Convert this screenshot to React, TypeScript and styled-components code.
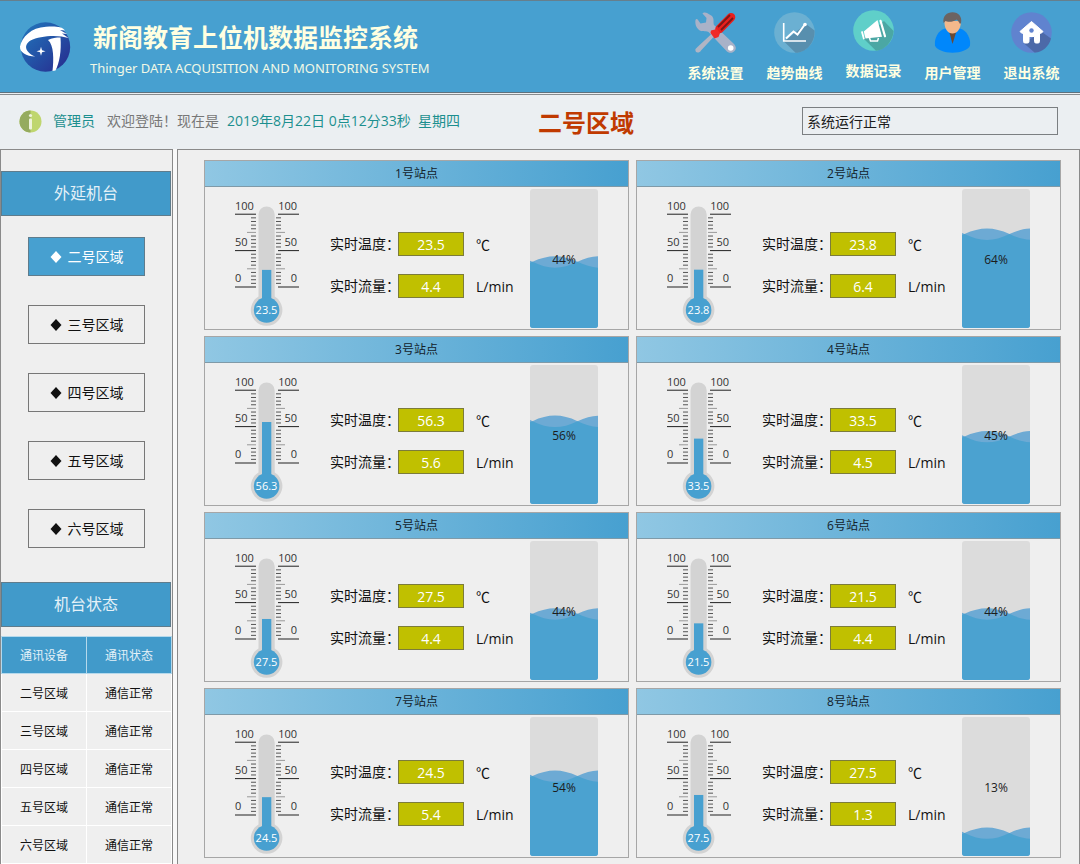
import React from 'react';
import styled, { createGlobalStyle, css } from 'styled-components';

const GlobalStyle = createGlobalStyle`
  *, *::before, *::after { box-sizing: border-box; }
  body {
    margin: 0;
    background: #ebeff2;
    color: #1c1c1c;
    font-family: "Open Sans", "Noto Sans CJK SC", sans-serif;
    font-size: 14px;
    line-height: 20px;
  }
  button, input { font: inherit; color: inherit; }
  h1, h2, h3, p { margin: 0; }
`;

const Page = styled.div`
  display: flex;
  flex-direction: column;
  min-height: 100vh;
  overflow-x: hidden;
`;

const Header = styled.header`
  display: flex;
  align-items: flex-start;
  justify-content: space-between;
  height: 93px;
  padding: 0 11px 0 18px;
  background: #47a0d0;
  border-top: 1px solid #667f8d;
  border-bottom: 1px solid #5d717e;
`;

const Brand = styled.div`
  display: flex;
  align-items: flex-start;
  padding-top: 19px;
  gap: 18px;
`;

const BrandText = styled.div`
  color: #ffffe1;
`;

const BrandTitle = styled.h1`
  padding-left: 3px;
  font-size: 25px;
  line-height: 34px;
  font-weight: 700;
`;

const BrandSubtitle = styled.p`
  font-family: "Noto Sans", sans-serif;
  font-size: 13px;
  line-height: 28px;
  color: #f1f8e6;
`;

const Nav = styled.nav`
  display: flex;
  gap: 4px;
  padding-top: 9px;
`;

const NavButton = styled.button<{ $raised?: boolean }>`
  display: flex;
  flex-direction: column;
  align-items: center;
  gap: 10px;
  width: 75px;
  padding: ${(p) => (p.$raised ? '0' : '2px')} 0 0;
  border: 0;
  background: none;
  color: #ffffe1;
  font-size: 14px;
  line-height: 20px;
  font-weight: 700;
  white-space: nowrap;
  cursor: pointer;
`;

const StatusBar = styled.section`
  display: flex;
  align-items: center;
  height: 55px;
  padding: 0 22px 2px 19px;
  border-top: 1px solid #868b8e;
  margin-top: 1px;
`;

const Greeting = styled.div`
  display: flex;
  flex: 1;
  align-items: center;
  white-space: pre;
  color: #777;
`;

const Teal = styled.span`
  color: #1c8f8f;
`;

const UserName = styled(Teal)`
  margin: 0 12px 0 11px;
`;

const Clock = styled.time`
  margin-left: 8px;
  color: #1c8f8f;
`;

const AreaTitle = styled.h2`
  padding-top: 4px;
  color: #c03a00;
  font-size: 24px;
  line-height: 32px;
`;

const StatusBox = styled.input`
  width: 256px;
  height: 28px;
  padding: 0 4px;
  border: 1px solid #7b7f82;
  background: #ebeff2;
  color: #1c1c1c;
`;

const StatusSide = styled.div`
  display: flex;
  flex: 0 0 424px;
  justify-content: flex-end;
`;

const Main = styled.main`
  display: flex;
  flex: 1;
  gap: 4px;
  background: #f9f9f9;
`;

const panel = css`
  background: #efefef;
  border: 1px solid #8a8a8a;
  border-bottom: 0;
`;

const Sidebar = styled.aside`
  ${panel}
  width: 173px;
  flex: none;
  padding-top: 21px;
`;

const SideHeading = styled.h2`
  height: 45px;
  margin-right: 1px;
  border: 1px solid #5f7c8c;
  background: #419aca;
  color: #e4f1f8;
  font-size: 16px;
  line-height: 42px;
  font-weight: 400;
  text-align: center;
`;

const AreaList = styled.div`
  display: flex;
  flex-direction: column;
  align-items: center;
  gap: 29px;
  padding: 21px 0 34px;
`;

const AreaButton = styled.button<{ $active?: boolean }>`
  display: flex;
  align-items: center;
  justify-content: center;
  gap: 6px;
  width: 117px;
  height: 39px;
  padding: 0;
  border: 1px solid ${(p) => (p.$active ? '#5f7c8c' : '#777')};
  background: ${(p) => (p.$active ? '#47a0d0' : '#efefef')};
  color: ${(p) => (p.$active ? '#fff' : '#111')};
  cursor: pointer;
`;

const StatusTable = styled.table`
  width: 100%;
  margin-top: 9px;
  border-collapse: collapse;
  table-layout: fixed;
  font-size: 12px;
  text-align: center;
  th, td {
    height: 38px;
    padding: 2px 0 0;
    border: 1px solid #fff;
    color: #111;
  }
  th {
    height: 37px;
    border-color: #b5d9ec;
    background: #419aca;
    color: #e4f1f8;
    font-weight: 400;
  }
`;

const Board = styled.section`
  ${panel}
  flex: 1;
  display: grid;
  grid-template-columns: 1fr 1fr;
  align-content: start;
  gap: 6px 7px;
  padding: 10px 18px 6px 26px;
`;

const Card = styled.article`
  height: 170px;
  border: 1px solid #a6a6a6;
`;

const CardTitle = styled.h3`
  height: 26px;
  border-bottom: 1px solid #7f9aa8;
  background: linear-gradient(90deg, #90c7e3, #47a0d0);
  color: #13222b;
  font-size: 12px;
  line-height: 25px;
  font-weight: 400;
  text-align: center;
`;

const CardBody = styled.div`
  display: flex;
  justify-content: space-between;
  padding: 2px 30px 0 27px;
`;

const Left = styled.div`
  display: flex;
`;

const ThermoSvg = styled.svg`
  display: block;
  margin-top: 6px;
  font-size: 11px;
`;

const Readings = styled.div`
  display: flex;
  flex-direction: column;
  gap: 18px;
  margin: 43px 0 0 26px;
`;

const Reading = styled.div`
  display: grid;
  grid-template-columns: 68px 66px auto;
  align-items: center;
  height: 24px;
  color: #111;
  white-space: nowrap;
`;

const Value = styled.output`
  height: 24px;
  border: 1px solid #7c7c3a;
  background: #c0c000;
  color: #fff;
  line-height: 23px;
  text-align: center;
`;

const Unit = styled.span`
  padding: 2px 0 0 12px;
`;

const TankSvg = styled.svg`
  display: block;
  font-size: 12px;
`;

function Logo() {
  return (
    <svg width="54" height="54" viewBox="0 0 54 54" aria-hidden="true">
      <defs>
        <linearGradient id="logo" x1="0" y1="0" x2="1" y2="1">
          <stop offset="0" stopColor="#2278bd" />
          <stop offset="0.5" stopColor="#2352a6" />
          <stop offset="1" stopColor="#28288c" />
        </linearGradient>
      </defs>
      <circle cx="27.500" cy="27" r="24.700" fill="url(#logo)" />
      <path d="M2 26.500C4 17 13 7.500 28 6.700C36 6.200 44 6 47 10.500L42 10L49 14L44 13.500L50.500 18C40 14.500 22 15.500 12.500 20.500C4 26 9 33.500 17.500 36.500C8 36.500 1.500 32 2 26.500Z" fill="#fff" />
      <path d="M30 20C34 17.800 38 17.500 42.500 17.500C43.500 31 41.500 43 37.500 50.500L34.500 51C35.800 40 36 25 30 20Z" fill="#fff" />
      <path d="M23 26.800L24 30.300L27.500 31.300L24 32.300L23 35.800L22 32.300L18.500 31.300L22 30.300Z" fill="#fff" />
    </svg>
  );
}

function InfoIcon() {
  return (
    <svg width="23" height="23" viewBox="0 0 23 23" aria-hidden="true">
      <circle cx="11.500" cy="11.500" r="11" fill="#bfd66f" />
      <path d="M11.500 0.500a11 11 0 0 0 0 22z" fill="#95ab5f" />
      <circle cx="11.500" cy="5.500" r="1.600" fill="#eef3dc" />
      <rect x="10" y="8.500" width="3" height="11" rx="1" fill="#eef3dc" />
    </svg>
  );
}

function ToolsIcon() {
  return (
    <svg width="41" height="41" viewBox="0 0 41 41" aria-hidden="true">
      <path d="M7.500 1.500C8.500 0 11 0.500 12 1L17 4C19.500 7 18 10 19 13L38.500 31.500C42 35 41 38 39 39.500C37 41.500 33 41 31.500 39L13.500 20C10 18.500 7 20.500 3.500 17.500C0.500 15 0 11 0.500 8C1 6.500 2.500 7 3 8L5.500 11.500L11 10.500L11.500 6Z" fill="#a9b2c8" />
      <circle cx="35.700" cy="36" r="2.800" fill="#fff" />
      <path d="M17 21.500L19.500 24L6 38.500C4.500 41.500 -0.500 41.500 0.500 37L3 34.500Z" fill="#b0b5c4" />
      <path d="M24.500 17L36 5.200" stroke="#e9201d" strokeWidth="8.600" strokeLinecap="round" />
      <path d="M16 18.500L22 17L25 21L23.500 25L19.500 26.500L15.500 21Z" fill="#f02a26" />
      <path d="M35 3L23 15M38 6L26 18" stroke="#7d1717" strokeWidth="1.800" />
    </svg>
  );
}

function ChartIcon() {
  return (
    <svg width="41" height="41" viewBox="0 0 41 41" aria-hidden="true">
      <circle cx="20.500" cy="20.500" r="20.300" fill="#6bb0d2" />
      <path d="M32 12L40.500 18.500C41.500 30 32 41 21.500 40.700L10 29.500Z" fill="#588fae" />
      <path d="M9.700 11V29H32" fill="none" stroke="#fff" strokeWidth="1.600" />
      <path d="M12 26.500L19.500 19.500L23.500 22.500L30.500 13" fill="none" stroke="#fff" strokeWidth="2" />
      <circle cx="31" cy="12.500" r="1.800" fill="#fff" />
    </svg>
  );
}

function HornIcon() {
  return (
    <svg width="41" height="41" viewBox="0 0 41 41" aria-hidden="true">
      <circle cx="20.500" cy="20.500" r="20.300" fill="#5fcfc9" />
      <path d="M31 11L40.600 21C40 32 31 40.500 23 40.800L10 28Z" fill="#4ba7a4" />
      <path d="M24.500 10L29 26.700L12.500 28.500L10.800 21.500Z" fill="#fff" />
      <path d="M9 22L10.800 28.500" stroke="#fff" strokeWidth="1.800" strokeLinecap="round" />
      <path d="M27.500 10.800L32 26.300" stroke="#fff" strokeWidth="2.200" strokeLinecap="round" />
      <path d="M16.500 28L17.500 31H24.500L25.500 28" fill="none" stroke="#fff" strokeWidth="1.500" />
    </svg>
  );
}

function UserIcon() {
  return (
    <svg width="41" height="41" viewBox="0 0 41 41" aria-hidden="true">
      <path d="M13 16.500C6 18 2 27 3 33.500C4 37.500 12 40.700 20.500 40.700C29 40.700 37 37.500 38 33.500C39 27 35 18 28 16.500Z" fill="#0087fb" />
      <path d="M17 19H24.500L20.500 32Z" fill="#6b4a35" />
      <path d="M12.500 9C12 17 16 21.500 20.500 21.500C25 21.500 29 17 29 9Z" fill="#f3b88b" />
      <path d="M11.500 11C10.500 4 15 0.300 20.500 0.300C26.500 0.300 30.500 5 29 11L28 12C27 10 26 8.500 24.500 7.500C21 10.500 15 10 13.500 9Z" fill="#6c6361" />
    </svg>
  );
}

function HomeIcon() {
  return (
    <svg width="41" height="41" viewBox="0 0 41 41" aria-hidden="true">
      <circle cx="20.500" cy="20.500" r="20.300" fill="#6083cf" />
      <path d="M31 20L40 26.500C38 35 30 41 23.500 40.600L12.500 31Z" fill="#4c69a8" />
      <path d="M20.500 9.500L32 19.500L30 21.500L28.500 20.500V29.500Q28.500 31 27 31H25Q23.500 31 23.500 29.500V24.500H18V29.500Q18 31 16.500 31H14Q12.500 31 12.500 29.500V20.500L11 21.500L9 19.500Z" fill="#fff" stroke="#fff" strokeLinejoin="round" />
      <circle cx="20.500" cy="18.500" r="2.200" fill="#6083cf" />
    </svg>
  );
}

function Thermometer({ value }: { value: number }) {
  const zero = 92;
  const step = 3.64;
  const ticks = Array.from({ length: 21 }, (_, i) => i);
  const top = zero - value * step / 5;
  return (
    <ThermoSvg width="72" height="136" viewBox="0 0 72 136" role="img" aria-label={`温度 ${value}`}>
      <path d="M26.500 19.500a8.100 8.100 0 0 1 16.200 0V101.500a15.800 15.800 0 1 1-16.200 0Z" fill="#d3d3d3" />
      {ticks.map((i) => {
        const y = zero - i * step;
        const major = i % 10 === 0;
        const len = major ? 21 : i % 5 === 0 ? 9 : 5;
        const color = major ? '#222' : i % 5 === 0 ? '#999' : '#555';
        return (
          <g key={i} fill={color}>
            <rect x={24 - len} y={y - 0.5} width={len} height={1} />
            <rect x={major ? 46 : 44} y={y - 0.5} width={len} height={1} />
          </g>
        );
      })}
      {[100, 50, 0].map((n, i) => (
        <g key={n} fill="#333">
          <text x="3" y={15 + i * 36}>{n}</text>
          <text x="65" y={15 + i * 36} textAnchor="end">{n}</text>
        </g>
      ))}
      <rect x="30" y={top} width="9.300" height={105 - top} fill="#47a0d0" />
      <circle cx="34.600" cy="115" r="12.800" fill="#47a0d0" />
      <text x="34.500" y="119" textAnchor="middle" fill="#fff">{value}</text>
    </ThermoSvg>
  );
}

function Tank({ percent, id }: { percent: number; id: number }) {
  const y = 139 - percent * 1.39;
  return (
    <TankSvg width="68" height="139" viewBox="0 0 68 139" role="img" aria-label={`${percent}%`}>
      <clipPath id={`tank-${id}`}>
        <rect width="68" height="139" rx="3" />
      </clipPath>
      <g clipPath={`url(#tank-${id})`}>
        <rect width="68" height="139" fill="#dcdcdc" />
        <g transform={`translate(0 ${y})`}>
          <path d="M-42 -5C-26 -12.400 -13 -12.400 2.500 -5C18.500 -12.400 31.500 -12.400 47.500 -5C63.500 -12.400 76.500 -12.400 92.500 -5V139H-42Z" fill="#6daad4" />
          <path d="M-42 -5C-26 2.800 -13 2.800 2.500 -5C18.500 2.800 31.500 2.800 47.500 -5C63.500 2.800 76.500 2.800 92.500 -5V139H-42Z" fill="#4ba2d0" />
        </g>
      </g>
      <text x="34" y="75" textAnchor="middle" fill="#1c1c1c">{percent}%</text>
    </TankSvg>
  );
}

const navItems = [
  { label: '系统设置', icon: <ToolsIcon /> },
  { label: '趋势曲线', icon: <ChartIcon /> },
  { label: '数据记录', icon: <HornIcon />, raised: true },
  { label: '用户管理', icon: <UserIcon /> },
  { label: '退出系统', icon: <HomeIcon /> },
];

const areas = ['二号区域', '三号区域', '四号区域', '五号区域', '六号区域'];

const stations = [
  { temp: 23.5, flow: 4.4, level: 44 },
  { temp: 23.8, flow: 6.4, level: 64 },
  { temp: 56.3, flow: 5.6, level: 56 },
  { temp: 33.5, flow: 4.5, level: 45 },
  { temp: 27.5, flow: 4.4, level: 44 },
  { temp: 21.5, flow: 4.4, level: 44 },
  { temp: 24.5, flow: 5.4, level: 54 },
  { temp: 27.5, flow: 1.3, level: 13 },
];

export default function App() {
  return (
    <Page>
      <GlobalStyle />
      <Header>
        <Brand>
          <Logo />
          <BrandText>
            <BrandTitle>新阁教育上位机数据监控系统</BrandTitle>
            <BrandSubtitle>Thinger DATA ACQUISITION AND MONITORING SYSTEM</BrandSubtitle>
          </BrandText>
        </Brand>
        <Nav>
          {navItems.map((n) => (
            <NavButton key={n.label} type="button" $raised={n.raised}>
              {n.icon}
              {n.label}
            </NavButton>
          ))}
        </Nav>
      </Header>
      <StatusBar>
        <Greeting>
          <InfoIcon />
          <UserName>管理员</UserName>
          <span>欢迎登陆！现在是</span>
          <Clock>2019年8月22日 0点12分33秒  星期四</Clock>
        </Greeting>
        <AreaTitle>二号区域</AreaTitle>
        <StatusSide>
          <StatusBox aria-label="系统状态" readOnly value="系统运行正常" />
        </StatusSide>
      </StatusBar>
      <Main>
        <Sidebar>
          <SideHeading>外延机台</SideHeading>
          <AreaList>
            {areas.map((a, i) => (
              <AreaButton key={a} type="button" $active={i === 0}>
                <svg width="12" height="12" viewBox="0 0 12 12" aria-hidden="true">
                  <path d="M6 0L11.500 6L6 12L0.500 6Z" fill="currentColor" />
                </svg>
                {a}
              </AreaButton>
            ))}
          </AreaList>
          <SideHeading>机台状态</SideHeading>
          <StatusTable>
            <thead>
              <tr><th scope="col">通讯设备</th><th scope="col">通讯状态</th></tr>
            </thead>
            <tbody>
              {areas.map((a) => (
                <tr key={a}><td>{a}</td><td>通信正常</td></tr>
              ))}
            </tbody>
          </StatusTable>
        </Sidebar>
        <Board>
          {stations.map((s, i) => (
            <Card key={i}>
              <CardTitle>{i + 1}号站点</CardTitle>
              <CardBody>
                <Left>
                  <Thermometer value={s.temp} />
                  <Readings>
                    <Reading>
                      <span>实时温度：</span>
                      <Value>{s.temp}</Value>
                      <Unit>℃</Unit>
                    </Reading>
                    <Reading>
                      <span>实时流量：</span>
                      <Value>{s.flow}</Value>
                      <Unit>L/min</Unit>
                    </Reading>
                  </Readings>
                </Left>
                <Tank percent={s.level} id={i} />
              </CardBody>
            </Card>
          ))}
        </Board>
      </Main>
    </Page>
  );
}
